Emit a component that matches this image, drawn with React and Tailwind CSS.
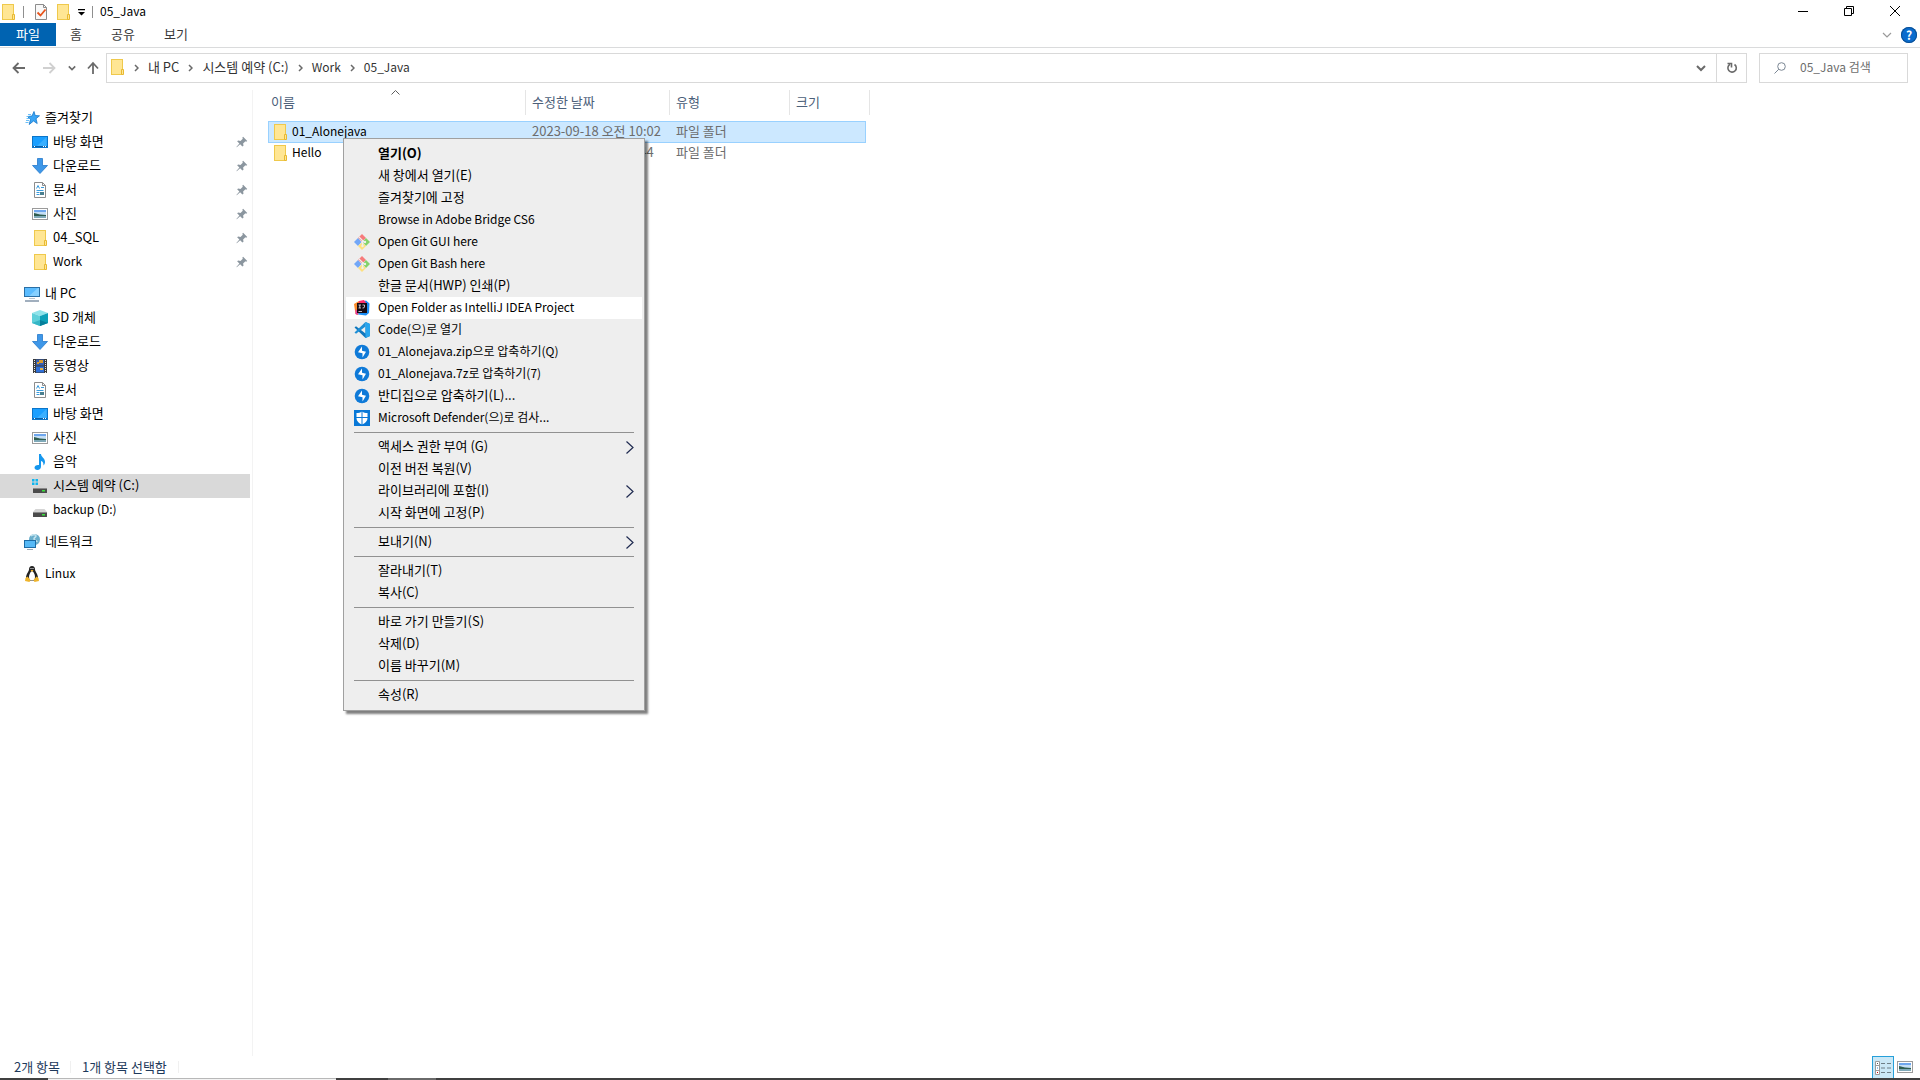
import React from 'react';
import clsx from 'clsx';

const Svg = ({ size = 16, className, children }) => (
    <svg width={size} height={size} viewBox="0 0 16 16" fill="none" className={clsx('block shrink-0', className)} aria-hidden="true">
        {children}
    </svg>
);

const FolderIcon = () => (
    <Svg>
        <rect x="2.5" y="0.5" width="11" height="15" fill="#ffe694" stroke="#efc94c" />
        <path d="M12.5 15.5v-5h2v5z" fill="#ffe694" stroke="#e8b931" />
    </Svg>
);

const StarIcon = () => (
    <Svg>
        <path d="M10 1.500l1.200 4 4.300.3-3.500 2.900 1.200 4.800-3.700-2.500-4.300 3.500 1.300-5L3.500 6.500l4.500-.5z" fill="#3aa5f5" stroke="#1576c9" strokeWidth="0.8" />
        <path d="M4 4.500h3M2.500 6.500h2M2.500 8.500h3M2 10.500h3M1.500 12.500h3" stroke="#6cc0f7" />
    </Svg>
);

const DesktopIcon = () => (
    <Svg>
        <rect x="0.5" y="2.500" width="15" height="11" fill="#1a9fff" stroke="#0b75c9" />
        <path d="M5 12L14.500 3v9z" fill="#3bb0ff" />
        <path d="M1 12.500h14" stroke="#0a5fa8" />
        <path d="M2 12.500h1M11 12.500h1M13 12.500h1" stroke="#fff" />
    </Svg>
);

const DownloadIcon = () => (
    <Svg>
        <path d="M5.500.5h5v7h5L8 15.500.5 7.500h5z" fill="#3e97e8" stroke="#2478cc" strokeWidth="0.8" />
    </Svg>
);

const DocumentIcon = () => (
    <Svg>
        <path d="M2.500.5h8l3 3v12h-11z" fill="#fff" stroke="#8c8c8c" />
        <path d="M10.500.5v3h3" stroke="#8c8c8c" />
        <path d="M4.500 6.500l1.500-3 1.500 3M9 5.500h3M4.500 8.500h7M4.500 10.500h3M4.500 12.500h3" stroke="#3a9bdc" />
        <rect x="8" y="10" width="4" height="3" fill="#4a7f8f" />
    </Svg>
);

const PictureIcon = () => (
    <Svg>
        <rect x="0.5" y="2.500" width="15" height="11" fill="#fff" stroke="#9b9b9b" />
        <rect x="2" y="4" width="12" height="8" fill="#c4def5" />
        <path d="M2 4h12v2H2z" fill="#6ea6ee" />
        <path d="M2 7l6 1.500 6 .5v1H2z" fill="#2f5d50" />
        <path d="M2 10h12v2H2z" fill="#7fa9b8" />
    </Svg>
);

const PcIcon = () => (
    <Svg>
        <rect x="0.5" y="1.500" width="15" height="9" fill="#5bbcff" stroke="#2a6fa5" />
        <path d="M5 10L14 2h1v8z" fill="#86d0ff" />
        <path d="M5 12.500h6" stroke="#b9c4cc" />
        <path d="M1 15h14" stroke="#8295a8" strokeWidth="1.500" />
    </Svg>
);

const CubeIcon = () => (
    <Svg>
        <path d="M8 0l8 3-8 3-8-3z" fill="#8fe3ea" />
        <path d="M0 3l8 3v10l-8-3z" fill="#5fd0da" />
        <path d="M16 3L8 6v10l8-3z" fill="#0da0b8" />
        <path d="M8 10v6l-8-3z" fill="#35b6c6" />
        <path d="M8 10l8 3-8 3z" fill="#067f9b" />
    </Svg>
);

const VideoIcon = () => (
    <Svg>
        <rect x="1" y="1" width="14" height="14" fill="#3b3b3b" />
        <rect x="4" y="1.500" width="8" height="6" fill="#355fb5" />
        <rect x="4" y="8.500" width="8" height="6" fill="#2f6fd6" />
        <path d="M7 2h4v3H7zM5 4h2v2H5z" fill="#d69a2d" />
        <path d="M8 10h3v2H8z" fill="#e3b34a" />
        <path d="M2.500 2v13M13.500 2v13" stroke="#e5e5e5" strokeDasharray="1 1" />
    </Svg>
);

const MusicIcon = () => (
    <Svg>
        <path d="M7 0h2c0 3 4 4 4 8 0 2-1 3-1.500 3.500C11.500 9 11 7.500 9 7v5.500C9 14.500 7.500 16 5.500 16S2.500 15 2.500 13.500s2-3 4.500-2.500z" fill="#1597ee" />
    </Svg>
);

const Drive = () => (
    <>
        <path d="M3.500 7h9L15 10H1z" fill="#d5d5d5" />
        <rect x="1" y="10" width="14" height="5" rx="0.5" fill="#4b4b4b" />
        <path d="M1 10.500h14" stroke="#8a8a8a" />
        <rect x="10" y="12" width="3" height="1.500" fill="#39e03c" />
    </>
);

const SystemDriveIcon = () => (
    <Svg>
        <Drive />
        <path d="M0 0h7v8H0z" fill="#d9d9d9" />
        <path d="M0 1h2.500v2.500H0zM3.500 1H6v2.500H3.500zM0 4.500h2.500V7H0zM3.500 4.500H6V7H3.500z" fill="#10b6ef" />
    </Svg>
);

const DriveIcon = () => (
    <Svg>
        <Drive />
    </Svg>
);

const NetworkIcon = () => (
    <Svg>
        <circle cx="10.500" cy="5.500" r="5.500" fill="#6aaecb" />
        <path d="M7 2c2-2 5-1.500 5 0s-2 1-2 3 3 1 3 3" stroke="#c3e3ee" strokeWidth="1.500" />
        <rect x="0.5" y="6.500" width="11" height="7" fill="#56b9f6" stroke="#1d6ca5" />
        <path d="M3 15.500h6" stroke="#9aa9b5" />
    </Svg>
);

const LinuxIcon = () => (
    <Svg>
        <path d="M8 0c2 0 3 1.500 3 3.500 0 2 3 4.500 3 8.500 0 2-2 3-6 3s-6-1-6-3c0-4 3-6.500 3-8.500C5 1.500 6 0 8 0z" fill="#222" />
        <path d="M8 5c2 1 3 4 3 6 0 3-1 3.500-3 3.500S5 14 5 11c0-2 1-5 3-6z" fill="#fff" />
        <path d="M6.500 4h3L8 6z" fill="#f5b32b" />
        <path d="M3.500 10.500l3 3.500-1 2-4.500-1 .5-3zM12.500 10.500l-3 3.500 1 2 4.500-1-.5-3z" fill="#eeb42c" />
        <path d="M6.500 2.500h1M8.500 2.500h1" stroke="#fff" />
    </Svg>
);

const PinIcon = () => (
    <Svg size={12}>
        <path d="M9.500 1L15 6.500l-1.500 1-1-.5-3 3 .5 3-1.500 1-3-3L1 15l-.5-.5 4-4.500-3-3L3 6l3 .5 3-3L8.500 2z" fill="#8b969f" />
    </Svg>
);

const GitIcon = () => (
    <Svg>
        <path d="M8 0l4 4-4 3.500L4 4z" fill="#f77b7b" />
        <path d="M0 8l4-4 3.500 4L4 12z" fill="#72a7f7" />
        <path d="M16 8l-4-4-3.500 4 3.500 4z" fill="#84d26a" />
        <path d="M8 16l4-4-4-3.500L4 12z" fill="#fde07e" />
        <path d="M5 3l5.500 5.500M8.500 6v6" stroke="#eee" strokeWidth="1.200" />
        <circle cx="11" cy="8" r="1.200" fill="#eee" />
        <circle cx="8.500" cy="12" r="1.200" fill="#eee" />
    </Svg>
);

const IntellijIcon = () => (
    <Svg>
        <path d="M0 4l5-3 4 2-5 12-2.500-1z" fill="#fc8d2b" />
        <path d="M8 2l4-1.500 3.500 3L15 13l-3 2.500-8-1z" fill="#1a8df5" />
        <path d="M5 1l5-1 3 4-9 2z" fill="#fe2e6c" />
        <path d="M1.500 9l3 3-1 3-2-1z" fill="#e53ba0" />
        <rect x="3" y="3" width="10" height="10" fill="#160b14" />
        <path d="M4.500 5h2.500M4.500 8h2.500M5.750 5v3M8.500 5H10.500V7q0 1-2 1M4.500 11.500h3.500" stroke="#e8e4e8" strokeWidth="0.8" />
    </Svg>
);

const VsCodeIcon = () => (
    <Svg>
        <path d="M11.500 0L16 2v12l-4.500 2L0.500 5.500 2 4.200 11.500 11.500z" fill="#1077bd" />
        <path d="M11.500 0v4.500L2 11.800.5 10.500z" fill="#1e8fd6" />
        <path d="M11.500 0L16 2v12l-4.500 2z" fill="#27a5ee" />
    </Svg>
);

const BandizipIcon = () => (
    <Svg>
        <circle cx="8" cy="8" r="7.300" fill="#0f7ad8" />
        <path d="M8 2.500v4.300l4 1L8.500 13.500V9.200l-4.500-1z" fill="#fff" />
    </Svg>
);

const DefenderIcon = () => (
    <Svg>
        <rect width="16" height="16" fill="#0878d7" />
        <path d="M8 1.500C6.500 2.500 4.500 3 2.500 3v5c0 3 2.500 5.500 5.500 6.500 3-1 5.500-3.500 5.500-6.500V3c-2 0-4-.5-5.500-1.500z" fill="#fff" />
        <path d="M8 1v14M2 7.500h12" stroke="#0878d7" />
    </Svg>
);

const CheckDocIcon = () => (
    <Svg>
        <path d="M2.500.5h8l3 3v12h-11z" fill="#f8f8f8" stroke="#8c8c8c" />
        <path d="M10.500.5v3h3" stroke="#8c8c8c" />
        <path d="M4.500 8.500l3 3 5-6" stroke="#e8541c" strokeWidth="1.800" />
    </Svg>
);

const Chevron = ({ className }) => (
    <svg width="5" height="8" viewBox="0 0 5 8" fill="none" className={clsx('block shrink-0', className)} aria-hidden="true">
        <path d="M1 1l3 3-3 3" stroke="currentColor" strokeWidth="1.500" />
    </svg>
);

const DownChevron = ({ width = 10, stroke = 2 }) => (
    <svg width={width} height={width} viewBox="0 0 10 10" fill="none" className="block" aria-hidden="true">
        <path d="M1 3l4 4 4-4" stroke="currentColor" strokeWidth={stroke} />
    </svg>
);

// Latin words run wide next to Hangul, so they are set one size down
const Label = ({ children, className }) => (
    <span className={clsx('block pb-0.5 whitespace-nowrap', /[A-Za-z]{4}/.test(children) && 'text-[12px]', className)}>{children}</span>
);

const sidebarGroups = [
    {
        icon: StarIcon,
        text: '즐겨찾기',
        items: [
            { icon: DesktopIcon, text: '바탕 화면', pinned: true },
            { icon: DownloadIcon, text: '다운로드', pinned: true },
            { icon: DocumentIcon, text: '문서', pinned: true },
            { icon: PictureIcon, text: '사진', pinned: true },
            { icon: FolderIcon, text: '04_SQL', pinned: true },
            { icon: FolderIcon, text: 'Work', pinned: true }
        ]
    },
    {
        icon: PcIcon,
        text: '내 PC',
        items: [
            { icon: CubeIcon, text: '3D 개체' },
            { icon: DownloadIcon, text: '다운로드' },
            { icon: VideoIcon, text: '동영상' },
            { icon: DocumentIcon, text: '문서' },
            { icon: DesktopIcon, text: '바탕 화면' },
            { icon: PictureIcon, text: '사진' },
            { icon: MusicIcon, text: '음악' },
            { icon: SystemDriveIcon, text: '시스템 예약 (C:)', selected: true },
            { icon: DriveIcon, text: 'backup (D:)' }
        ]
    },
    { icon: NetworkIcon, text: '네트워크', items: [] },
    { icon: LinuxIcon, text: 'Linux', items: [] }
];

const files = [
    { name: '01_Alonejava', date: '2023-09-18 오전 10:02', type: '파일 폴더', selected: true },
    { name: 'Hello', date: '2023-09-15 오후 5:44', type: '파일 폴더' }
];

const menuGroups = [
    [
        { text: '열기(O)', bold: true },
        { text: '새 창에서 열기(E)' },
        { text: '즐겨찾기에 고정' },
        { text: 'Browse in Adobe Bridge CS6' },
        { text: 'Open Git GUI here', icon: GitIcon },
        { text: 'Open Git Bash here', icon: GitIcon },
        { text: '한글 문서(HWP) 인쇄(P)' },
        { text: 'Open Folder as IntelliJ IDEA Project', icon: IntellijIcon, active: true },
        { text: 'Code(으)로 열기', icon: VsCodeIcon },
        { text: '01_Alonejava.zip으로 압축하기(Q)', icon: BandizipIcon },
        { text: '01_Alonejava.7z로 압축하기(7)', icon: BandizipIcon },
        { text: '반디집으로 압축하기(L)...', icon: BandizipIcon },
        { text: 'Microsoft Defender(으)로 검사...', icon: DefenderIcon }
    ],
    [
        { text: '액세스 권한 부여 (G)', submenu: true },
        { text: '이전 버전 복원(V)' },
        { text: '라이브러리에 포함(I)', submenu: true },
        { text: '시작 화면에 고정(P)' }
    ],
    [{ text: '보내기(N)', submenu: true }],
    [{ text: '잘라내기(T)' }, { text: '복사(C)' }],
    [{ text: '바로 가기 만들기(S)' }, { text: '삭제(D)' }, { text: '이름 바꾸기(M)' }],
    [{ text: '속성(R)' }]
];

const TitleBar = () => (
    <header className="flex h-[23px] items-center">
        <FolderIcon />
        <span className="ml-[7px] h-3 w-px bg-[#8f8f8f]" />
        <button aria-label="속성" className="ml-[9px]"><CheckDocIcon /></button>
        <button aria-label="새 폴더" className="ml-[6px]"><FolderIcon /></button>
        <button aria-label="사용자 지정" className="ml-[7px]">
            <svg width="7" height="8" viewBox="0 0 7 8" className="block">
                <path d="M0 1h7v1.200H0zM0 4h7L3.500 7.500z" fill="#000" />
            </svg>
        </button>
        <span className="ml-[7px] h-3 w-px bg-[#8f8f8f]" />
        <h1 className="ml-[7px]"><Label>05_Java</Label></h1>
        <div className="ml-auto flex h-full pr-0.5 pb-0.5">
            <button aria-label="최소화" className="flex w-[46px] items-center justify-center">
                <svg width="10" height="10" viewBox="0 0 10 10"><path d="M0 5h10v1H0z" fill="#000" /></svg>
            </button>
            <button aria-label="이전 크기로 복원" className="flex w-[46px] items-center justify-center">
                <svg width="10" height="10" viewBox="0 0 10 10" fill="none">
                    <path d="M.5 2.500h7v7h-7zM2.500 2.500v-2h7v7h-2" stroke="#000" />
                </svg>
            </button>
            <button aria-label="닫기" className="flex w-[46px] items-center justify-center">
                <svg width="10" height="10" viewBox="0 0 10 10"><path d="M0 0l10 10M10 0L0 10" stroke="#000" /></svg>
            </button>
        </div>
    </header>
);

const RibbonTabs = () => (
    <div className="flex h-[25px] items-start border-b border-[#dadbdc] text-[#3b3b3b]">
        <button className="h-[23px] w-14 bg-[#0063b1] text-white"><Label>파일</Label></button>
        <button className="h-[23px] w-10"><Label>홈</Label></button>
        <button className="h-[23px] w-[54px]"><Label>공유</Label></button>
        <button className="h-[23px] w-[52px]"><Label>보기</Label></button>
        <button aria-label="리본 확장" className="mt-[7px] ml-auto text-[#9a9a9a]"><DownChevron stroke={1.2} /></button>
        <button aria-label="도움말" className="mt-1 mr-[3px] ml-[9px] flex size-4 items-center justify-center rounded-full bg-[#0a6cce] text-xs font-bold text-white ring-1 ring-[#0b4f94] ring-inset">
            ?
        </button>
    </div>
);

const AddressBar = () => (
    <div className="flex h-[42px] items-start px-3 pt-[5px]">
        <div className="flex h-[30px] w-[94px] shrink-0 items-center text-[#6a6a6a]">
            <button aria-label="뒤로">
                <svg width="14" height="12" viewBox="0 0 14 12" fill="none"><path d="M13 6H2M6.500 1L1.500 6l5 5" stroke="currentColor" strokeWidth="1.800" /></svg>
            </button>
            <button aria-label="앞으로" className="ml-4 text-[#d0d0d0]">
                <svg width="14" height="12" viewBox="0 0 14 12" fill="none"><path d="M1 6h11M7.500 1l5 5-5 5" stroke="currentColor" strokeWidth="1.800" /></svg>
            </button>
            <button aria-label="최근 위치" className="ml-3"><DownChevron width={8} /></button>
            <button aria-label="위로" className="ml-2.5">
                <svg width="14" height="14" viewBox="0 0 14 14" fill="none"><path d="M7 13V2M2 7.500l5-5.500 5 5.500" stroke="currentColor" strokeWidth="1.800" /></svg>
            </button>
        </div>
        <div className="flex h-[30px] flex-1 items-center border border-[#d9d9d9]">
            <div className="ml-0.5 pb-0.5"><FolderIcon /></div>
            <nav className="flex items-center text-[#333]">
                {['내 PC', '시스템 예약 (C:)', 'Work', '05_Java'].map((name) => (
                    <React.Fragment key={name}>
                        <Chevron className="mx-[9px] text-[#6a6a6a]" />
                        <a href="#"><Label>{name}</Label></a>
                    </React.Fragment>
                ))}
            </nav>
            <button aria-label="이전 위치" className="ml-auto flex h-full w-[30px] items-center justify-center text-[#6a6a6a]"><DownChevron /></button>
            <button aria-label="새로 고침" className="flex h-full w-[30px] items-center justify-center border-l border-[#d9d9d9] text-[#6a6a6a]">
                <svg width="12" height="12" viewBox="0 0 12 12" fill="none">
                    <path d="M8.500 2.500A4.200 4.200 0 1 1 4 2.300" stroke="currentColor" strokeWidth="1.600" />
                    <path d="M1.500 1.500h4v4" stroke="currentColor" strokeWidth="1.600" />
                </svg>
            </button>
        </div>
        <label className="ml-3 flex h-[30px] w-[149px] items-center border border-[#d9d9d9]">
            <svg width="12" height="12" viewBox="0 0 12 12" fill="none" className="ml-[14px] shrink-0">
                <circle cx="7.500" cy="4.500" r="3.800" stroke="#7b8794" />
                <path d="M4.800 7.200L.5 11.500" stroke="#7b8794" />
            </svg>
            <input type="text" aria-label="검색" placeholder="05_Java 검색" className="ml-[14px] w-full min-w-0 pb-0.5 text-[12px] outline-none placeholder:text-[#6d6d6d]" />
        </label>
    </div>
);

const SidebarRow = ({ item, nested }) => (
    <a href="#" className={clsx('mr-0.5 flex h-6 items-center gap-[5px] pr-0.5', nested ? 'pl-8' : 'pl-6', item.selected && 'bg-[#d9d9d9]')}>
        <item.icon />
        <Label className="flex-1">{item.text}</Label>
        {item.pinned && <PinIcon />}
    </a>
);

const Sidebar = () => (
    <aside className="flex w-[253px] shrink-0 flex-col gap-2 border-r border-[#f3f3f3] pt-4">
        {sidebarGroups.map((group) => (
            <div key={group.text}>
                <SidebarRow item={group} />
                {group.items.map((item) => <SidebarRow key={item.text} item={item} nested />)}
            </div>
        ))}
    </aside>
);

const HeaderCell = ({ children, className }) => (
    <th className={clsx('h-[31px] p-0 text-left align-top font-normal text-[#4c607a]', className)}>
        <div className="relative flex h-[25px] items-center border-r border-[#e5e5e5] pl-1.5">{children}</div>
    </th>
);

const Cell = ({ selected, className, children }) => (
    <td className="p-0">
        <div className={clsx('flex items-center', selected ? 'h-[22px] border-y border-[#99d1ff] bg-[#cce8ff]' : 'h-5', className)}>
            {children}
        </div>
    </td>
);

const FileTable = () => (
    <table className="ml-[15px] w-[602px] table-fixed border-separate border-spacing-0">
        <thead>
            <tr>
                <HeaderCell className="w-[258px]">
                    <Label className="-ml-[3px]">이름</Label>
                    <svg width="9" height="5" viewBox="0 0 9 5" fill="none" className="absolute top-0 left-[123px]">
                        <path d="M.5 4.500l4-4 4 4" stroke="#5d5d5d" />
                    </svg>
                </HeaderCell>
                <HeaderCell className="w-36"><Label>수정한 날짜</Label></HeaderCell>
                <HeaderCell className="w-[120px]"><Label>유형</Label></HeaderCell>
                <HeaderCell className="w-20"><Label>크기</Label></HeaderCell>
            </tr>
        </thead>
        <tbody className="text-[#6d6d6d]">
            {files.map((file) => (
                <tr key={file.name}>
                    <Cell selected={file.selected} className={clsx('gap-1 text-black', file.selected ? 'border-l pl-[3px]' : 'pl-1')}>
                        <FolderIcon />
                        <Label>{file.name}</Label>
                    </Cell>
                    <Cell selected={file.selected} className="pl-1.5"><Label>{file.date}</Label></Cell>
                    <Cell selected={file.selected} className="pl-1.5"><Label>{file.type}</Label></Cell>
                    <Cell selected={file.selected} className={clsx('mr-1', file.selected && 'border-r')} />
                </tr>
            ))}
        </tbody>
    </table>
);

const ContextMenu = () => (
    <div role="menu" className="absolute top-12 left-[90px] w-[302px] border border-[#a0a0a0] bg-[#eeeeee] px-0.5 py-1 shadow-[3px_3px_2px_rgba(0,0,0,0.5)]">
        {menuGroups.map((group, i) => (
            <div key={i}>
                {i > 0 && <hr className="mx-2 my-[3px] border-t border-[#919191]" />}
                {group.map((item) => (
                    <button
                        key={item.text}
                        role="menuitem"
                        className={clsx('flex h-[22px] w-full items-center gap-2 px-2 text-left', item.active && 'bg-white', item.bold && 'font-bold')}
                    >
                        {item.icon ? <item.icon /> : <span className="w-4" />}
                        <Label className="flex-1">{item.text}</Label>
                        {item.submenu && (
                            <svg width="8" height="13" viewBox="0 0 8 13" fill="none">
                                <path d="M.5.5l6.500 6-6.500 6" stroke="#1f2a50" strokeWidth="1.200" />
                            </svg>
                        )}
                    </button>
                ))}
            </div>
        ))}
    </div>
);

const StatusBar = () => (
    <footer className="flex h-[22px] items-center pl-3.5 text-[#1e395b]">
        <span className="w-[57px] border-r border-[#f0f0f0] leading-3">2개 항목</span>
        <span className="w-[108px] border-r border-[#f0f0f0] pl-[11px] leading-3">1개 항목 선택함</span>
        <button aria-label="자세히" className="ml-auto flex h-[22px] w-[22px] items-center justify-center border border-b-0 border-[#26a0da] bg-[#cbe8f6]">
            <Svg>
                <path d="M.5 1.500h4v13h-4z" fill="#fff" stroke="#9b9b9b" />
                <path d="M.5 5.500h4M.5 10.500h4" stroke="#9b9b9b" />
                <path d="M2 3.500h1" stroke="#555" />
                <path d="M2 8h1" stroke="#2f80d0" />
                <path d="M2 12.500h1" stroke="#c00" />
                <path d="M6 3.500h4M12 3.500h4M6 8h4M12 8h4M6 12.500h4M12 12.500h4" stroke="#6f7f87" />
            </Svg>
        </button>
        <button aria-label="큰 아이콘" className="mr-[7px] ml-[3px] h-4"><PictureIcon /></button>
    </footer>
);

const TaskbarEdge = () => (
    <div className="flex h-0.5 bg-[#404040]">
        <div className="ml-12 w-72 border-t border-[#b8b8b8] bg-[#f3f3f3]" />
        <div className="ml-[52px] w-12 bg-[#6a6a6a]" />
    </div>
);

const App = () => {
    return (
        <div className="flex min-h-screen flex-col bg-white font-['Noto_Sans_CJK_KR',sans-serif] text-[13px] leading-4 text-black">
            <TitleBar />
            <RibbonTabs />
            <AddressBar />
            <div className="flex flex-1">
                <Sidebar />
                <main className="relative flex-1">
                    <FileTable />
                    <ContextMenu />
                </main>
            </div>
            <StatusBar />
            <TaskbarEdge />
        </div>
    );
};

export default App;
